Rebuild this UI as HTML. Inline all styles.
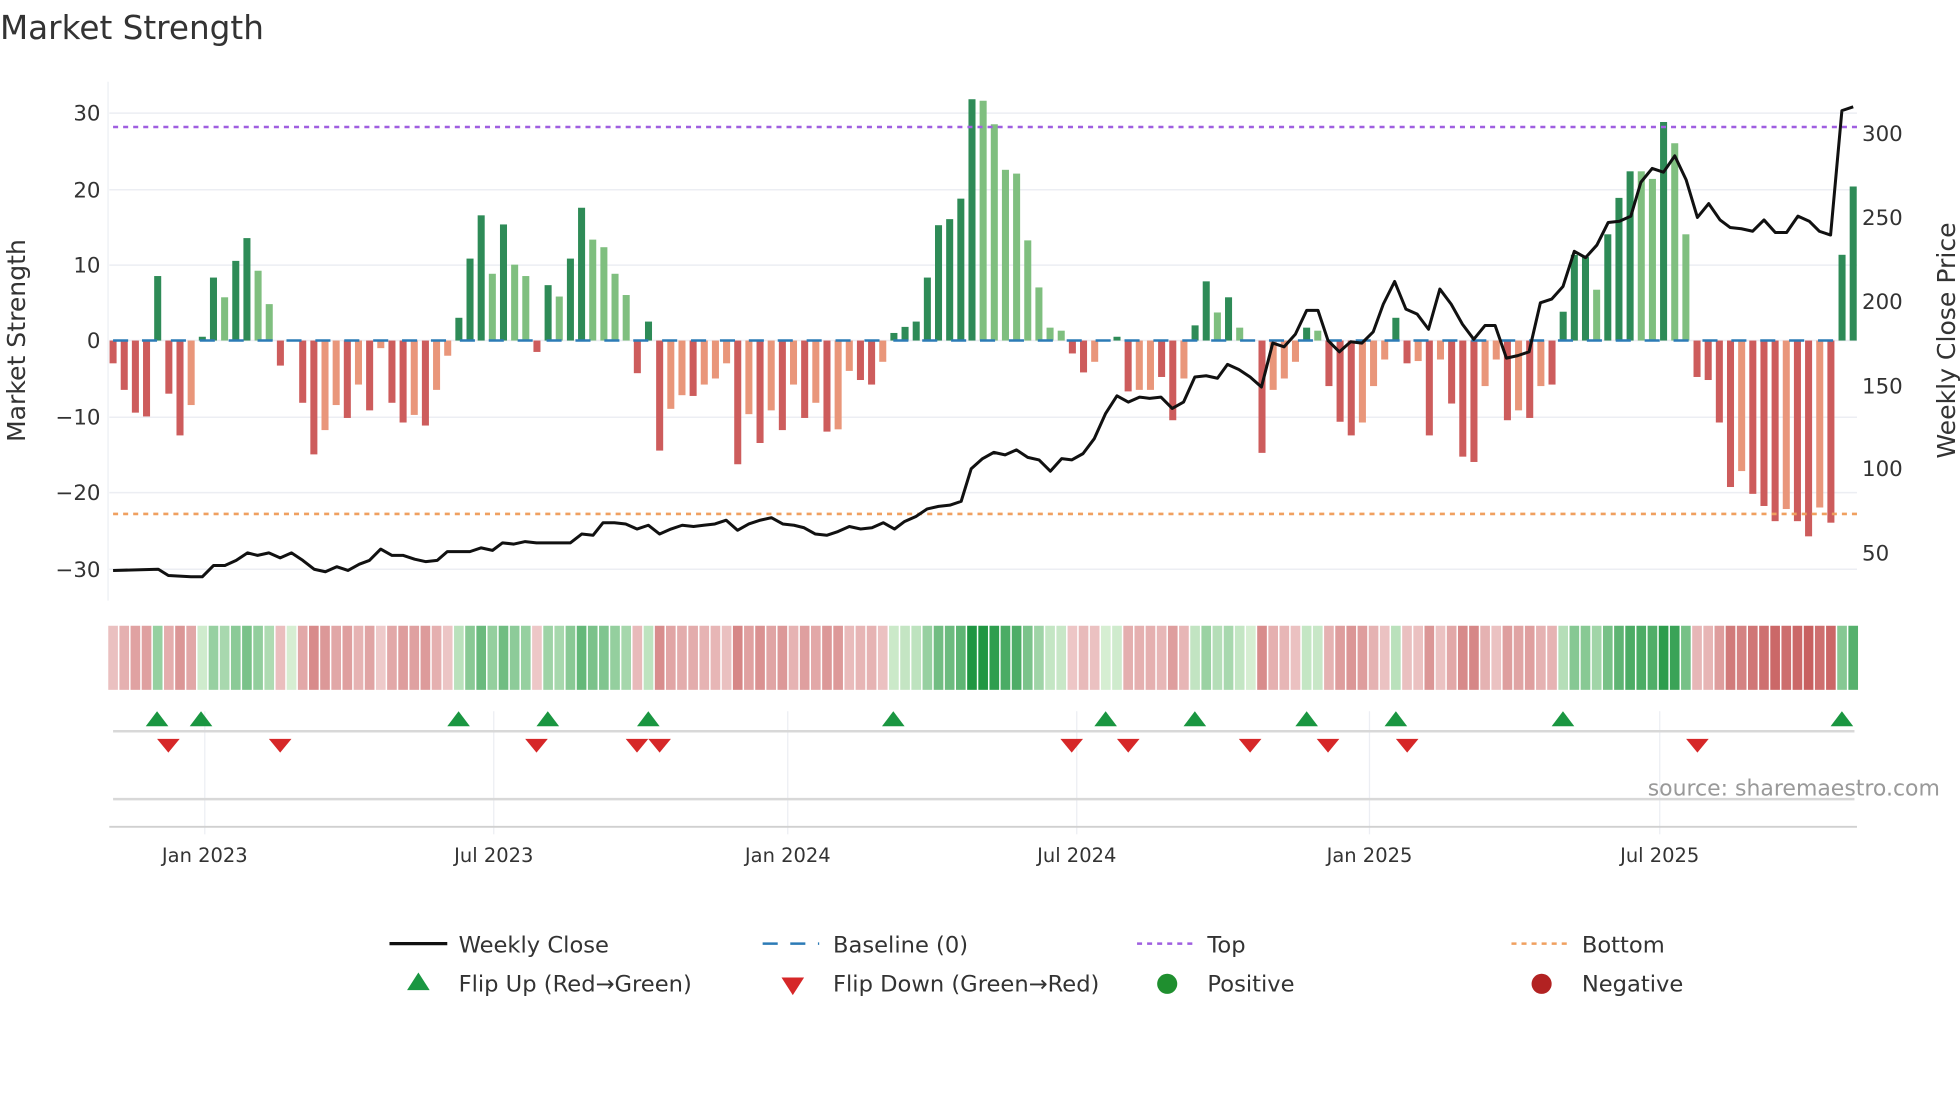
<!DOCTYPE html>
<html><head><meta charset="utf-8"><style>
html,body{margin:0;padding:0;background:#fff;}
svg{display:block;font-family:"DejaVu Sans","Liberation Sans",sans-serif;}
</style></head><body>
<svg id="s" width="1960" height="1102" viewBox="0 0 1560 877" xmlns="http://www.w3.org/2000/svg">
<rect width="1560" height="877" fill="#fff"/>
<text x="0" y="31" font-size="26" fill="#333">Market Strength</text>
<g id="grid" stroke="#eceef3" stroke-width="1.2"></g>
<line x1="86" y1="65" x2="86" y2="478" stroke="#eceef3"/>
<g id="bars"></g>
<line x1="90" y1="101" x2="1478" y2="101" stroke="#9f5fe0" stroke-width="2" stroke-dasharray="4,4"/>
<line x1="90" y1="409" x2="1478" y2="409" stroke="#f0a060" stroke-width="2" stroke-dasharray="4,4"/>
<line x1="90" y1="271" x2="1462" y2="271" stroke="#2c7bb6" stroke-width="2" stroke-dasharray="12,11"/>
<polyline id="price" fill="none" stroke="#111" stroke-width="2.4" stroke-linejoin="round"/>
<g font-size="17" fill="#333" text-anchor="end">
<text x="80" y="96">30</text><text x="80" y="157">20</text><text x="80" y="217">10</text><text x="80" y="277">0</text><text x="80" y="338">−10</text><text x="80" y="398">−20</text><text x="80" y="459">−30</text>
</g>
<g font-size="17" fill="#333">
<text x="1482" y="112">300</text><text x="1482" y="179">250</text><text x="1482" y="246">200</text><text x="1482" y="313">150</text><text x="1482" y="379">100</text><text x="1482" y="446">50</text>
</g>
<text transform="translate(20,271) rotate(-90)" text-anchor="middle" font-size="20" fill="#333">Market Strength</text>
<text transform="translate(1556,271) rotate(-90)" text-anchor="middle" font-size="20" fill="#333">Weekly Close Price</text>
<g id="strip"></g>
<g id="vgrid" stroke="#eceef3"></g>
<line x1="90" y1="582" x2="1476" y2="582" stroke="#d8d8d8" stroke-width="2"/>
<line x1="90" y1="636" x2="1476" y2="636" stroke="#d8d8d8" stroke-width="2"/>
<line x1="87" y1="658" x2="1478" y2="658" stroke="#d0d0d0" stroke-width="1.5"/>
<g id="marks"></g>
<text x="1544" y="633" text-anchor="end" font-size="17.5" fill="#999">source: sharemaestro.com</text>
<g font-size="15.5" fill="#333" text-anchor="middle">
<text x="163" y="686">Jan 2023</text><text x="393" y="686">Jul 2023</text><text x="627" y="686">Jan 2024</text><text x="857" y="686">Jul 2024</text><text x="1090" y="686">Jan 2025</text><text x="1321" y="686">Jul 2025</text>
</g>
<g font-size="18" fill="#333">
<line x1="310" y1="751" x2="356" y2="751" stroke="#111" stroke-width="2.5"/><text x="365" y="758">Weekly Close</text>
<line x1="607" y1="751" x2="652" y2="751" stroke="#2c7bb6" stroke-width="2" stroke-dasharray="12,10"/><text x="663" y="758">Baseline (0)</text>
<line x1="905" y1="751" x2="950" y2="751" stroke="#9f5fe0" stroke-width="2" stroke-dasharray="4,4"/><text x="961" y="758">Top</text>
<line x1="1203" y1="751" x2="1248" y2="751" stroke="#f0a060" stroke-width="2" stroke-dasharray="4,4"/><text x="1259" y="758">Bottom</text>
<path d="M324,788 L342,788 L333,774 Z" fill="#1a9641"/><text x="365" y="789">Flip Up (Red→Green)</text>
<path d="M622,778 L640,778 L631,792 Z" fill="#d62728"/><text x="663" y="789">Flip Down (Green→Red)</text>
<circle cx="929" cy="783" r="8" fill="#1f8f2f"/><text x="961" y="789">Positive</text>
<circle cx="1227" cy="783" r="8" fill="#b22222"/><text x="1259" y="789">Negative</text>
</g>
</svg>
<script>
var NS="http://www.w3.org/2000/svg";
function el(p,t,a){var e=document.createElementNS(NS,t);for(var k in a)e.setAttribute(k,a[k]);document.getElementById(p).appendChild(e);return e;}
[90,151,211,271,332,392,453].forEach(function(y){el("grid","line",{x1:87,x2:1478,y1:y,y2:y});});
[163,393,627,857,1090,1321].forEach(function(x){el("vgrid","line",{x1:x,x2:x,y1:566,y2:664});});
var d=[[-3,1],[-6.5,1],[-9.5,1],[-10,1],[8.5,1],[-7,1],[-12.5,1],[-8.5,0],[0.5,1],[8.3,1],[5.7,0],[10.5,1],[13.5,1],[9.2,0],[4.8,0],[-3.3,1],[0,1],[-8.2,1],[-15,1],[-11.8,0],[-8.5,0],[-10.2,1],[-5.8,0],[-9.2,1],[-1,0],[-8.2,1],[-10.8,1],[-9.8,0],[-11.2,1],[-6.5,0],[-2,0],[3,1],[10.8,1],[16.5,1],[8.8,0],[15.3,1],[10,0],[8.5,0],[-1.5,1],[7.3,1],[5.8,0],[10.8,1],[17.5,1],[13.3,0],[12.3,0],[8.8,0],[6,0],[-4.3,1],[2.5,1],[-14.5,1],[-9,0],[-7.2,0],[-7.3,1],[-5.8,0],[-5,0],[-3,0],[-16.3,1],[-9.7,0],[-13.5,1],[-9.2,0],[-11.8,1],[-5.8,0],[-10.2,1],[-8.2,0],[-12,1],[-11.7,0],[-4,0],[-5.2,1],[-5.8,1],[-2.8,0],[1,1],[1.8,1],[2.5,1],[8.3,1],[15.2,1],[16,1],[18.7,1],[31.8,1],[31.6,0],[28.5,0],[22.5,0],[22,0],[13.2,0],[7,0],[1.7,0],[1.3,0],[-1.7,1],[-4.2,1],[-2.8,0],[0,1],[0.5,1],[-6.7,1],[-6.5,0],[-6.5,0],[-4.8,1],[-10.5,1],[-5,0],[2,1],[7.8,1],[3.7,0],[5.7,1],[1.7,0],[0,1],[-14.8,1],[-6.5,0],[-5,0],[-2.8,0],[1.7,1],[1.3,0],[-6,1],[-10.7,1],[-12.5,1],[-10.8,0],[-6,0],[-2.5,0],[3,1],[-3,1],[-2.7,0],[-12.5,1],[-2.5,0],[-8.3,1],[-15.3,1],[-16,1],[-6,0],[-2.5,0],[-10.5,1],[-9.2,0],[-10.2,1],[-6,0],[-5.8,1],[3.8,1],[11.3,1],[11,1],[6.7,0],[14,1],[18.8,1],[22.3,1],[22.3,0],[21.3,0],[28.8,1],[26,0],[14,0],[-4.8,1],[-5.2,1],[-10.8,1],[-19.3,1],[-17.2,0],[-20.2,1],[-21.8,1],[-23.8,1],[-22.2,0],[-23.8,1],[-25.8,1],[-22,0],[-24,1],[11.3,1],[20.3,1]];
var n=d.length,sp=(1475-90)/(n-1),k=6.04,bw=5.6;
function mix(a,b,t){return "rgb("+[0,1,2].map(function(i){return Math.round(a[i]+(b[i]-a[i])*t);}).join(",")+")";}
d.forEach(function(v,i){var x=90+i*sp,val=v[0],c;
 if(val>=0)c=v[1]?"#2e8b57":"#7fbf7f";else c=v[1]?"#cd5c5c":"#e9967a";
 if(Math.abs(val)>0.05){var h=Math.abs(val)*k;el("bars","rect",{x:x-bw/2,y:val>0?271-h:271,width:bw,height:h,fill:c});}
 var sc;if(val>=0){var t=Math.min(val/32,1);sc=mix([214,238,210],[30,150,65],Math.pow(t,0.8));}
 else{var t=Math.min(-val/26,1);sc=mix([240,208,208],[200,95,95],Math.pow(t,0.9));}
 el("strip","rect",{x:x-sp/2+0.6,y:498,width:sp-1.2,height:51,fill:sc});
});
var p="90,454 126,453 134,458 152,459 161,459 170,450 179,450 188,446 197,440 205,442 214,440 223,444 232,440 241,446 250,453 259,455 268,451 277,454 286,449 294,446 303,437 312,442 321,442 330,445 339,447 348,446 356,439 365,439 374,439 383,436 392,438 400,432 409,433 418,431 427,432 436,432 445,432 454,432 463,425 472,426 480,416 489,416 498,417 507,421 516,418 525,425 534,421 543,418 552,419 560,418 569,417 578,414 587,422 596,417 605,414 614,412 623,417 632,418 640,420 649,425 658,426 667,423 676,419 685,421 694,420 703,416 712,421 720,415 729,411 738,405 747,403 756,402 765,399 773,373 782,365 791,360 800,362 809,358 818,364 827,366 836,375 845,365 853,366 862,361 871,349 880,329 889,315 898,320 907,316 915,317 924,316 933,325 942,320 951,300 960,299 969,301 977,290 986,294 995,300 1004,308 1013,273 1022,276 1031,266 1040,247 1049,247 1057,271 1066,280 1075,272 1084,273 1093,264 1101,242 1110,224 1119,246 1128,250 1137,262 1146,230 1155,242 1164,258 1173,270 1182,259 1190,259 1199,285 1208,283 1217,280 1226,241 1235,238 1244,228 1253,200 1262,205 1271,195 1280,177 1289,176 1298,172 1306,145 1315,134 1324,137 1333,124 1342,143 1351,173 1360,162 1369,175 1377,181 1386,182 1395,184 1404,175 1413,185 1422,185 1431,172 1440,176 1448,184 1457,187 1466,88 1475,85";
document.getElementById("price").setAttribute("points",p);
[125,160,365,436,516,711,880,951,1040,1111,1244,1466].forEach(function(x){el("marks","path",{d:"M"+(x-9)+",578 L"+(x+9)+",578 L"+x+",566 Z",fill:"#1a9641"});});
[134,223,427,507,525,853,898,995,1057,1120,1351].forEach(function(x){el("marks","path",{d:"M"+(x-9)+",588 L"+(x+9)+",588 L"+x+",599 Z",fill:"#d62728"});});
</script>
</body></html>
